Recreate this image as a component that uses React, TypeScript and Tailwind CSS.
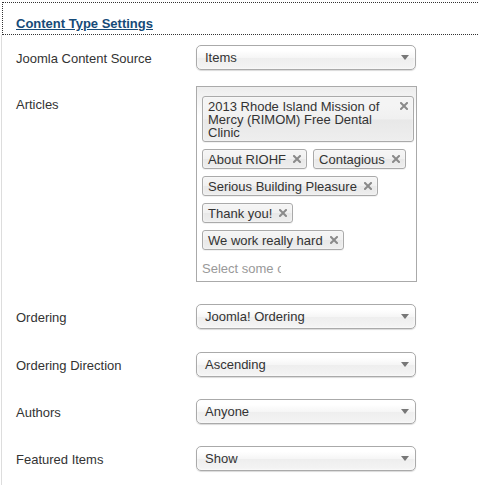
const font = { fontFamily: '"Liberation Sans", Arial, Helvetica, sans-serif' };

const Cross = () => (
  <svg width="8" height="8" viewBox="0 0 8 8" className="block">
    <path d="M1 1 L7 7 M7 1 L1 7" stroke="#8a8a8a" strokeWidth="2" strokeLinecap="square" />
  </svg>
);

const Arrow = () => (
  <svg width="8" height="5" viewBox="0 0 8 5" className="block">
    <path d="M0 0 L8 0 L4 5 Z" fill="#777" />
  </svg>
);

const Select = ({ value }: { value: string }) => (
  <div className="flex h-[25px] w-[220px] items-center justify-between rounded-[5px] border border-[#aaa] bg-[linear-gradient(#fff_20%,#f6f6f6_50%,#eee_52%,#f4f4f4_100%)] pl-[8px] pr-[6px] text-[13px] leading-[16px] text-[#333] shadow-[inset_0_0_3px_#fff,0_1px_1px_rgba(0,0,0,0.15)]">
    <span className="pt-[1px]">{value}</span>
    <Arrow />
  </div>
);

const Tag = ({ label }: { label: string }) => (
  <div className="relative max-w-full rounded-[3px] border border-[#aaa] bg-[linear-gradient(#f4f4f4_20%,#f0f0f0_50%,#e8e8e8_52%,#eee_100%)] pb-[2px] pl-[5px] pr-[20px] pt-[3px] text-[13px] leading-[13px] text-[#333] shadow-[inset_0_0_2px_#fff,0_1px_0_rgba(0,0,0,0.05)]">
    {label}
    <span className="absolute right-[5px] top-[5px]">
      <Cross />
    </span>
  </div>
);

const Row = ({
  label,
  labelPad = 'pt-[5px]',
  children,
  className,
}: {
  label: string;
  labelPad?: string;
  children: React.ReactNode;
  className?: string;
}) => (
  <div className={`flex ${className ?? ''}`}>
    <div className={`w-[180px] shrink-0 text-[13px] leading-[18px] text-[#333] ${labelPad}`}>{label}</div>
    {children}
  </div>
);

const tags = [
  '2013 Rhode Island Mission of Mercy (RIMOM) Free Dental Clinic',
  'About RIOHF',
  'Contagious',
  'Serious Building Pleasure',
  'Thank you!',
  'We work really hard',
];

export default function App() {
  return (
    <div className="h-[485px] w-[478px] overflow-hidden bg-white" style={font}>
      <div className="ml-[2px] mt-[2px] h-[33px] border-y border-l border-dotted border-[#333] pl-[13px] pt-[8px]">
        <span className="text-[13px] font-bold leading-[16px] text-[#164a78] underline underline-offset-1">
          Content Type Settings
        </span>
      </div>
      <div className="ml-[1px] h-[450px] border-l border-[#ddd] pl-[14px] pt-[10px]">
        <Row label="Joomla Content Source">
          <Select value="Items" />
        </Row>
        <Row label="Articles" labelPad="pt-[10px]" className="mt-[16px]">
          <div className="flex h-[196px] w-[221px] flex-wrap content-start gap-x-[6px] gap-y-[7px] border border-[#aaa] bg-[linear-gradient(#eee_1%,#fff_15%)] pl-[5px] pr-[2px] pt-[9px]">
            {tags.map(t => (
              <Tag key={t} label={t} />
            ))}
            <div className="mt-[1px] h-[22px] w-[79px] overflow-hidden whitespace-nowrap text-[13px] leading-[22px] text-[#999]">
              Select some options
            </div>
          </div>
        </Row>
        <Row label="Ordering" className="mt-[22px]">
          <Select value="Joomla! Ordering" />
        </Row>
        <Row label="Ordering Direction" className="mt-[23px]">
          <Select value="Ascending" />
        </Row>
        <Row label="Authors" className="mt-[22px]">
          <Select value="Anyone" />
        </Row>
        <Row label="Featured Items" className="mt-[22px]">
          <Select value="Show" />
        </Row>
      </div>
    </div>
  );
}
